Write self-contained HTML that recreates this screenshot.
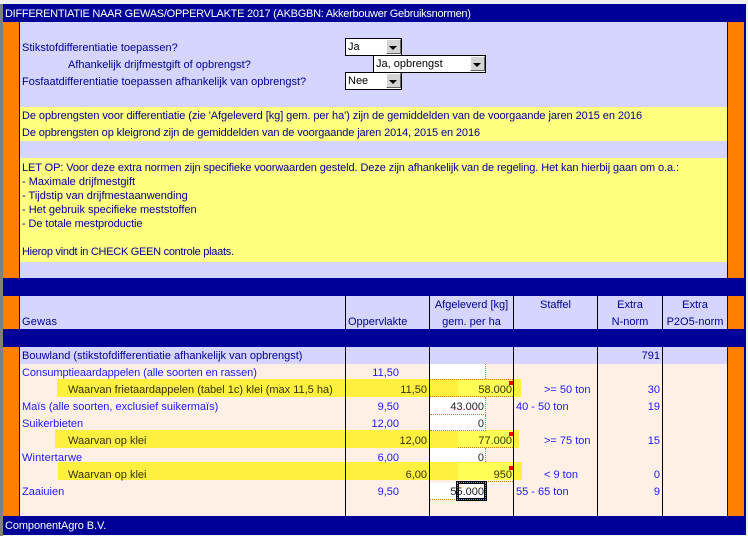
<!DOCTYPE html>
<html><head><meta charset="utf-8"><style>
html,body{margin:0;padding:0;background:#f0f0f0;}
#p{position:relative;width:748px;height:536px;overflow:hidden;font:11px/20px "Liberation Sans",sans-serif;color:#000099;letter-spacing:0;background:#f0f0f0}
#p div{position:absolute;white-space:nowrap}
.b{background:#000099}.o{background:#ff8000}.l{background:#d5d5ff}.y{background:#ffff80}.v{background:#000;width:1px;top:296px;height:33px}
.t{left:22px}.c{text-align:center}.r{text-align:right}
.q{color:#1a1aff}.k{color:#333300}
.bd{background:#fff040}.hy{background:#ffff55}.w{background:#fff}
.dr{border-right:1px dotted #e07000}.db{border-bottom:1px dotted #e07000}.dt{border-top:1px dotted #e07000}
.red{background:#f00;width:4px;height:4px}
.s{background:#fff;border:1px solid #000;box-sizing:border-box;height:18px;padding-left:2px;line-height:17px;color:#000}
.a{background:#d4d4d4;border:1px solid #fff;border-right-color:#666;border-bottom-color:#666;width:15px;height:15px;box-sizing:border-box}
.a:after{content:"";position:absolute;left:2px;top:6px;border:4px solid transparent;border-top:4px solid #000;border-bottom:0}
</style></head><body><div id="p">
<div style="left:0;top:4px;width:3px;height:532px;background:#808080"></div>
<div style="left:3px;top:4px;width:743px;height:531px;background:#000099"></div>
<div class="o" style="left:3px;top:22px;width:16px;height:494px"></div>
<div class="o" style="left:728px;top:22px;width:16px;height:494px"></div>
<div class="b" style="left:19px;top:22px;width:1px;height:494px"></div>
<div class="b" style="left:727px;top:22px;width:1px;height:494px"></div>
<div class="b" style="left:3px;top:278px;width:741px;height:18px"></div>
<div class="b" style="left:3px;top:329px;width:741px;height:18px"></div>

<div style="left:5px;top:4px;color:#fff;letter-spacing:-.27px">DIFFERENTIATIE NAAR GEWAS/OPPERVLAKTE 2017 (AKBGBN: Akkerbouwer Gebruiksnormen)</div>

<div class="l" style="left:20px;top:22px;width:707px;height:85px"></div>
<div class="y" style="left:20px;top:107px;width:707px;height:34px"></div>
<div class="l" style="left:20px;top:141px;width:707px;height:17px"></div>
<div class="y" style="left:20px;top:158px;width:707px;height:104px"></div>
<div class="l" style="left:20px;top:262px;width:707px;height:16px"></div>
<div class="l" style="left:20px;top:296px;width:707px;height:33px"></div>
<div class="l" style="left:20px;top:347px;width:707px;height:17px"></div>
<div style="left:20px;top:364px;width:707px;height:152px;background:#fff0e6"></div>

<div class="t" style="top:38px">Stikstofdifferentiatie toepassen?</div>
<div style="left:68px;top:55px">Afhankelijk drijfmestgift of opbrengst?</div>
<div class="t" style="top:72px">Fosfaatdifferentiatie toepassen afhankelijk van opbrengst?</div>

<div class="s" style="left:345px;top:38px;width:57px">Ja</div>
<div class="a" style="left:386px;top:39px"></div>
<div class="s" style="left:373px;top:55px;width:113px">Ja, opbrengst</div>
<div class="a" style="left:470px;top:56px"></div>
<div class="s" style="left:345px;top:72px;width:57px">Nee</div>
<div class="a" style="left:386px;top:73px"></div>

<div class="t" style="top:106px;letter-spacing:-.065px">De opbrengsten voor differentiatie (zie 'Afgeleverd [kg] gem. per ha') zijn de gemiddelden van de voorgaande jaren 2015 en 2016</div>
<div class="t" style="top:123px;letter-spacing:-.11px">De opbrengsten op kleigrond zijn de gemiddelden van de voorgaande jaren 2014, 2015 en 2016</div>
<div class="t" style="top:158px;letter-spacing:-.1px">LET OP: Voor deze extra normen zijn specifieke voorwaarden gesteld. Deze zijn afhankelijk van de regeling. Het kan hierbij gaan om o.a.:</div>
<div class="t" style="top:172px">- Maximale drijfmestgift</div>
<div class="t" style="top:186px">- Tijdstip van drijfmestaanwending</div>
<div class="t" style="top:200px">- Het gebruik specifieke meststoffen</div>
<div class="t" style="top:214px;letter-spacing:-.1px">- De totale mestproductie</div>
<div class="t" style="top:242px;letter-spacing:-.28px">Hierop vindt in CHECK GEEN controle plaats.</div>

<div class="t" style="top:312px;letter-spacing:.2px">Gewas</div>
<div style="left:348px;top:312px">Oppervlakte</div>
<div class="c" style="left:430px;width:83px;top:295px">Afgeleverd [kg]</div>
<div class="c" style="left:430px;width:83px;top:312px">gem. per ha</div>
<div class="c" style="left:514px;width:83px;top:295px">Staffel</div>
<div class="c" style="left:598px;width:64px;top:295px">Extra</div>
<div class="c" style="left:598px;width:64px;top:312px">N-norm</div>
<div class="c" style="left:663px;width:64px;top:295px">Extra</div>
<div class="c" style="left:663px;width:64px;top:312px">P2O5-norm</div>

<div class="bd" style="left:57px;top:379px;width:464px;height:18px"></div>
<div class="bd" style="left:55px;top:430px;width:464px;height:18px"></div>
<div class="bd" style="left:58px;top:462px;width:464px;height:18px"></div>
<div class="hy" style="left:458px;top:380px;width:55px;height:17px"></div>
<div class="hy" style="left:458px;top:431px;width:55px;height:17px"></div>
<div class="hy" style="left:458px;top:463px;width:55px;height:17px"></div>

<div class="w dr" style="left:430px;top:364px;width:55px;height:15px"></div>
<div class="w dr db" style="left:430px;top:397px;width:55px;height:17px"></div>
<div class="w dr db" style="left:430px;top:415px;width:55px;height:15px"></div>
<div class="w dr" style="left:430px;top:448px;width:55px;height:14px"></div>
<div class="w db" style="left:430px;top:483px;width:55px;height:16px"></div>
<div class="dt" style="left:430px;top:379px;width:83px;height:0"></div>
<div class="db" style="left:430px;top:396px;width:83px;height:0"></div>
<div class="db" style="left:458px;top:447px;width:55px;height:0"></div>
<div class="db" style="left:458px;top:481px;width:55px;height:0"></div>

<div class="v" style="left:345px"></div><div class="v" style="left:429px"></div><div class="v" style="left:513px"></div><div class="v" style="left:597px"></div><div class="v" style="left:662px"></div>
<div class="v" style="left:345px;top:347px;height:169px"></div><div class="v" style="left:429px;top:347px;height:169px"></div><div class="v" style="left:513px;top:347px;height:169px"></div><div class="v" style="left:597px;top:347px;height:169px"></div><div class="v" style="left:662px;top:347px;height:169px"></div>

<div class="red" style="left:509px;top:381px"></div>
<div class="red" style="left:509px;top:432px"></div>
<div class="red" style="left:509px;top:466px"></div>

<div class="t" style="top:346px">Bouwland (stikstofdifferentiatie afhankelijk van opbrengst)</div>
<div class="r" style="left:598px;width:62px;top:346px">791</div>

<div class="t q" style="top:363px;letter-spacing:-.08px">Consumptieaardappelen (alle soorten en rassen)</div>
<div class="r q" style="left:346px;width:53px;top:363px">11,50</div>
<div class="k" style="left:68px;top:380px">Waarvan frietaardappelen (tabel 1c) klei (max 11,5 ha)</div>
<div class="r k" style="left:346px;width:81px;top:380px">11,50</div>
<div class="r k" style="left:430px;width:82px;top:380px">58.000</div>
<div class="q" style="left:544px;top:380px">&gt;= 50 ton</div>
<div class="r q" style="left:598px;width:62px;top:380px">30</div>

<div class="t q" style="top:397px">Maïs (alle soorten, exclusief suikermaïs)</div>
<div class="r q" style="left:346px;width:53px;top:397px">9,50</div>
<div class="r" style="left:430px;width:54px;top:397px;color:#222">43.000</div>
<div class="q" style="left:516px;top:397px">40 - 50 ton</div>
<div class="r q" style="left:598px;width:62px;top:397px">19</div>

<div class="t q" style="top:414px">Suikerbieten</div>
<div class="r q" style="left:346px;width:53px;top:414px">12,00</div>
<div class="r" style="left:430px;width:54px;top:414px;color:#222">0</div>

<div class="k" style="left:68px;top:431px">Waarvan op klei</div>
<div class="r k" style="left:346px;width:81px;top:431px">12,00</div>
<div class="r k" style="left:430px;width:82px;top:431px">77.000</div>
<div class="q" style="left:544px;top:431px">&gt;= 75 ton</div>
<div class="r q" style="left:598px;width:62px;top:431px">15</div>

<div class="t q" style="top:448px;letter-spacing:.15px">Wintertarwe</div>
<div class="r q" style="left:346px;width:53px;top:448px">6,00</div>
<div class="r" style="left:430px;width:54px;top:448px;color:#222">0</div>

<div class="k" style="left:68px;top:465px">Waarvan op klei</div>
<div class="r k" style="left:346px;width:81px;top:465px">6,00</div>
<div class="r k" style="left:430px;width:82px;top:465px">950</div>
<div class="q" style="left:544px;top:465px">&lt; 9 ton</div>
<div class="r q" style="left:598px;width:62px;top:465px">0</div>

<div class="t q" style="top:482px">Zaaiuien</div>
<div class="r q" style="left:346px;width:53px;top:482px">9,50</div>
<div class="q" style="left:516px;top:482px">55 - 65 ton</div>
<div class="r q" style="left:598px;width:62px;top:482px">9</div>

<div style="left:456px;top:481px;width:31px;height:20px;box-sizing:border-box;border:3px solid #000;background:#fff;outline:1px dotted #55aaff;outline-offset:-2px"></div>
<div class="r" style="left:430px;width:54px;top:482px;color:#222">55.000</div>

<div style="left:5px;top:516px;color:#fff;letter-spacing:-.1px">ComponentAgro B.V.</div>
</div></body></html>
